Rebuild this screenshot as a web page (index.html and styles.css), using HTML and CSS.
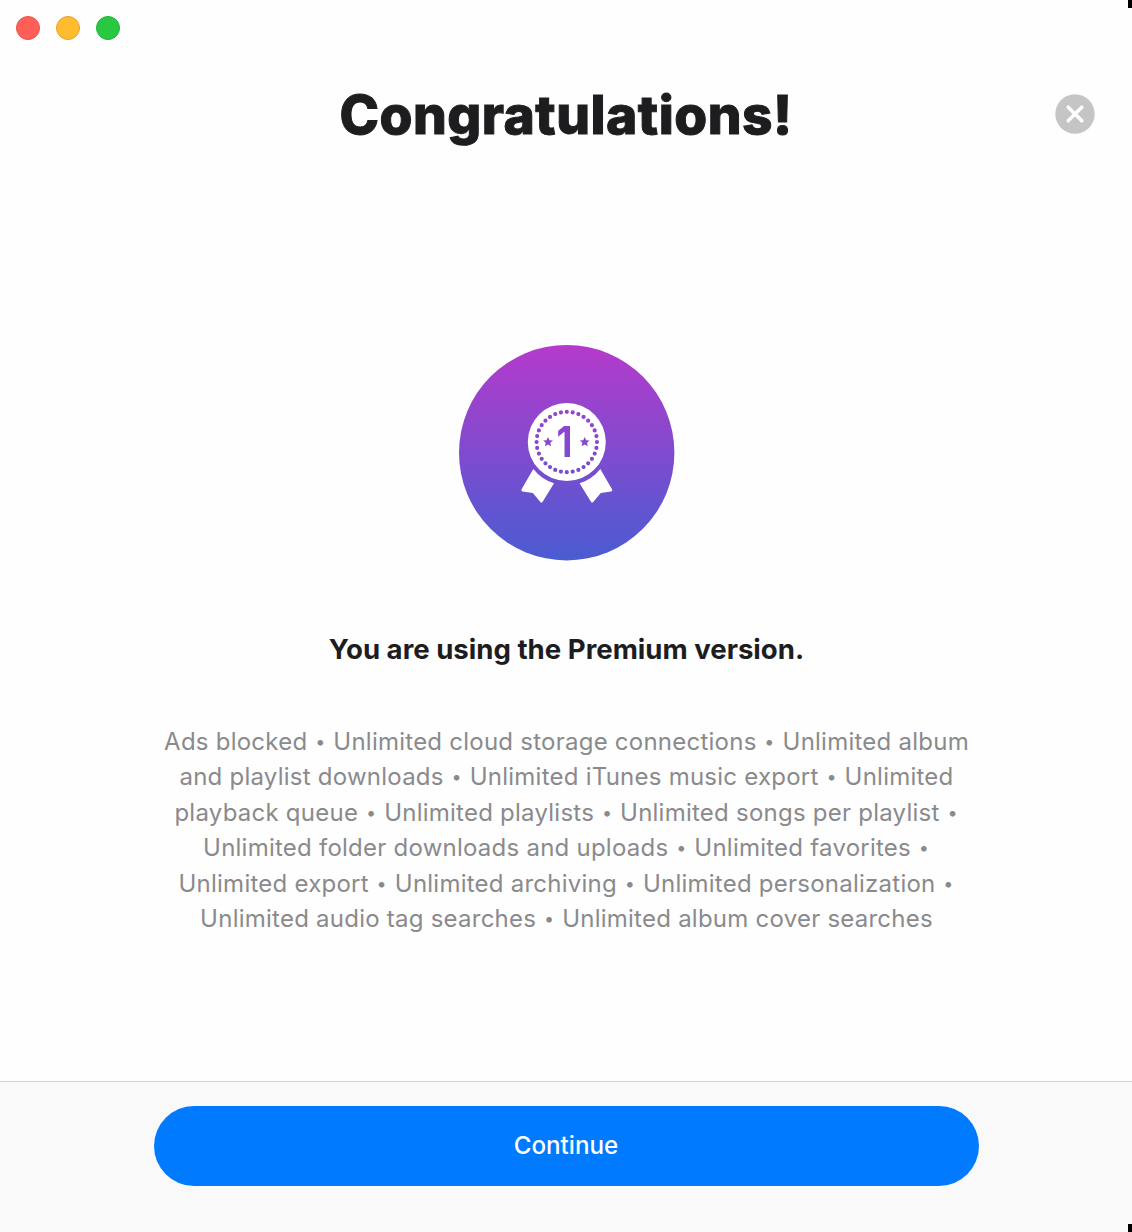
FILE: index.html
```html
<!DOCTYPE html>
<html lang="en">
<head>
<meta charset="utf-8">
<title>Congratulations!</title>
<link rel="stylesheet" href="styles.css">
</head>
<body>
<div class="window">
  <div class="titlebar"><span class="dot red"></span><span class="dot yellow"></span><span class="dot green"></span></div>
  <header class="header">
    <h1 class="title">Congratulations!</h1>
    <button class="close" aria-label="Close"><svg width="40" height="40" viewBox="0 0 40 40"><circle cx="20" cy="20" r="19.7" fill="#c5c5c5"/><path d="M13.200 13.200 26.800 26.800M26.800 13.200 13.200 26.800" stroke="#fff" stroke-width="3.500" stroke-linecap="round"/></svg></button>
  </header>
  <main class="content">
    <svg class="badge" width="216" height="216" viewBox="0 0 216 216">
      <defs>
        <linearGradient id="fade" x1="0" y1="0" x2="0" y2="1"><stop offset="0" stop-color="#b53acb"/><stop offset="1" stop-color="#4a5cd2"/></linearGradient>
        <path id="star" d="M0-5 1.500-1.700 4.900-1.500 2.300.800 3.100 4.200 0 2.400-3.100 4.200-2.300.800-4.900-1.500-1.500-1.700Z"/>
        <path id="ribbon" d="M74.300 124A43 43 0 0 0 95 138.300L83.500 157Q82.500 158.200 81.400 157L73.800 148 63.500 146.400Q61.700 145.900 62.600 144.200Z"/>
        <mask id="medal" maskUnits="userSpaceOnUse" x="0" y="0" width="216" height="216">
          <circle cx="107.800" cy="97" r="39" fill="#fff"/>
          <circle class="beads" cx="107.800" cy="97" r="30.200" pathLength="32"/>
          <use href="#star" x="89" y="97"/>
          <use href="#star" x="125.700" y="97"/>
          <text class="rank" transform="translate(105.500 112.200) scale(.860 1)" text-anchor="middle">1</text>
        </mask>
      </defs>
      <circle cx="107.700" cy="107.700" r="107.700" fill="url(#fade)"/>
      <use href="#ribbon" fill="#fff"/>
      <use href="#ribbon" fill="#fff" transform="matrix(-1 0 0 1 215.600 0)"/>
      <rect width="216" height="216" fill="#fff" mask="url(#medal)"/>
    </svg>
    <h2 class="subtitle">You are using the Premium version.</h2>
    <p class="features">
      <span>Ads blocked <i>•</i> Unlimited cloud storage connections <i>•</i> Unlimited album</span>
      <span>and playlist downloads <i>•</i> Unlimited iTunes music export <i>•</i> Unlimited</span>
      <span>playback queue <i>•</i> Unlimited playlists <i>•</i> Unlimited songs per playlist <i>•</i></span>
      <span>Unlimited folder downloads and uploads <i>•</i> Unlimited favorites <i>•</i></span>
      <span>Unlimited export <i>•</i> Unlimited archiving <i>•</i> Unlimited personalization <i>•</i></span>
      <span>Unlimited audio tag searches <i>•</i> Unlimited album cover searches</span>
    </p>
  </main>
  <footer class="footer"><button class="continue">Continue</button></footer>
</div>
</body>
</html>
```
FILE: styles.css
```css
* { box-sizing: border-box; margin: 0; padding: 0; }
body { width: 1132px; height: 1232px; background: #fefefe; font-family: Inter, "Liberation Sans", sans-serif; }
.window { position: relative; height: 1232px; display: flex; flex-direction: column; }
.window::before, .window::after { content: ""; position: absolute; right: 0; width: 4px; height: 8px; background: #000; }
.window::before { top: 0; }
.window::after { bottom: 0; }
.titlebar { display: flex; gap: 16px; padding: 16px; height: 56px; }
.dot { width: 24px; height: 24px; border-radius: 50%; border: 1px solid; }
.red { background: #ff5f57; border-color: #e9524b; }
.yellow { background: #febc2e; border-color: #e2a33a; }
.green { background: #28c840; border-color: #22b338; }
.header { display: grid; grid-template-columns: 77px 1fr 77px; align-items: center; height: 116px; }
.title { grid-column: 2; padding-top: 2px; text-align: center; font-size: 53.200px; line-height: 68px; font-weight: 800; letter-spacing: 0.500px; -webkit-text-stroke: 1px #1d1d1f; color: #1d1d1f; white-space: nowrap; }
.close { border: 0; background: none; width: 40px; height: 40px; }
.content { flex: 1; display: flex; flex-direction: column; align-items: center; padding-top: 173px; }
.badge { flex: none; margin-left: 2px; }
.beads { fill: none; stroke: #000; stroke-width: 4.200px; stroke-linecap: round; stroke-dasharray: 0 1; }
.rank { font: 700 43px Inter, sans-serif; fill: #000; }
.subtitle { margin-top: 68px; padding-left: 1px; font-size: 27.600px; line-height: 40px; font-weight: 700; color: #1d1d1f; }
.features { margin-top: 55px; padding-left: 1px; font-size: 24px; letter-spacing: 0.240px; line-height: 35.400px; color: #8a8a8c; text-align: center; }
.features span { display: block; white-space: nowrap; }
.features i { display: inline-block; width: 12px; font-size: 18px; font-style: normal; line-height: 20px; text-align: center; vertical-align: 2px; }
.footer { height: 151px; border-top: 1px solid #d2d2d2; background: #f9f9f9; padding-top: 24px; display: flex; justify-content: center; }
.continue { width: 825px; height: 80px; padding-bottom: 1px; border: 0; border-radius: 40px; background: #007aff; color: #fff; font: 500 24.200px Inter, sans-serif; }
```
